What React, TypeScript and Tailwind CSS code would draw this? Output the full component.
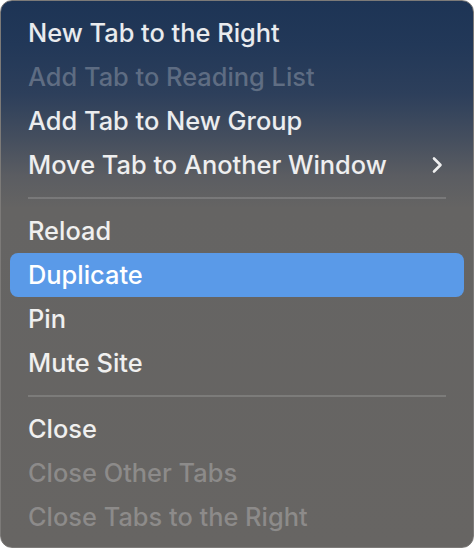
import React from 'react';

type Item = { label: string; disabled?: boolean; active?: boolean; submenu?: boolean };

const groups: Item[][] = [
  [
    { label: 'New Tab to the Right' },
    { label: 'Add Tab to Reading List', disabled: true },
    { label: 'Add Tab to New Group' },
    { label: 'Move Tab to Another Window', submenu: true },
  ],
  [
    { label: 'Reload' },
    { label: 'Duplicate', active: true },
    { label: 'Pin' },
    { label: 'Mute Site' },
  ],
  [
    { label: 'Close' },
    { label: 'Close Other Tabs', disabled: true },
    { label: 'Close Tabs to the Right', disabled: true },
  ],
];

function MenuRow({ item }: { item: Item }) {
  const color = item.active
    ? 'text-white bg-[#5a9ae8]'
    : item.disabled
    ? 'text-white/25'
    : 'text-white/90';
  return (
    <div className={`mx-[9px] h-[44px] rounded-[8px] pl-[18px] pr-[21px] flex items-center justify-between ${color}`}>
      <span className="pt-px">{item.label}</span>
      {item.submenu && (
        <svg width="12" height="18" viewBox="0 0 12 18" fill="none" className="text-white/90">
          <path d="M3 2.5 L9.5 9 L3 15.5" stroke="currentColor" strokeWidth="2.6" strokeLinecap="round" strokeLinejoin="round" />
        </svg>
      )}
    </div>
  );
}

export default function App() {
  return (
    <div className="w-[474px] h-[548px] bg-white">
      <div
        className="w-full h-full rounded-[12px] border border-[#7c7a78] bg-[linear-gradient(180deg,#1d3455_0%,#223858_8%,#2d3f5b_17%,#444e5e_25%,#5b5d62_32%,#656463_38%,#676563_100%)] pt-[10px] text-[25.4px] font-medium overflow-hidden"
        style={{ fontFamily: 'Inter, "Noto Sans", sans-serif' }}
      >
        {groups.map((g, gi) => (
          <div key={gi}>
            {gi > 0 && <div className="mx-[27px] my-[10px] h-[2px] bg-white/15" />}
            {g.map((it) => (
              <MenuRow key={it.label} item={it} />
            ))}
          </div>
        ))}
      </div>
    </div>
  );
}
